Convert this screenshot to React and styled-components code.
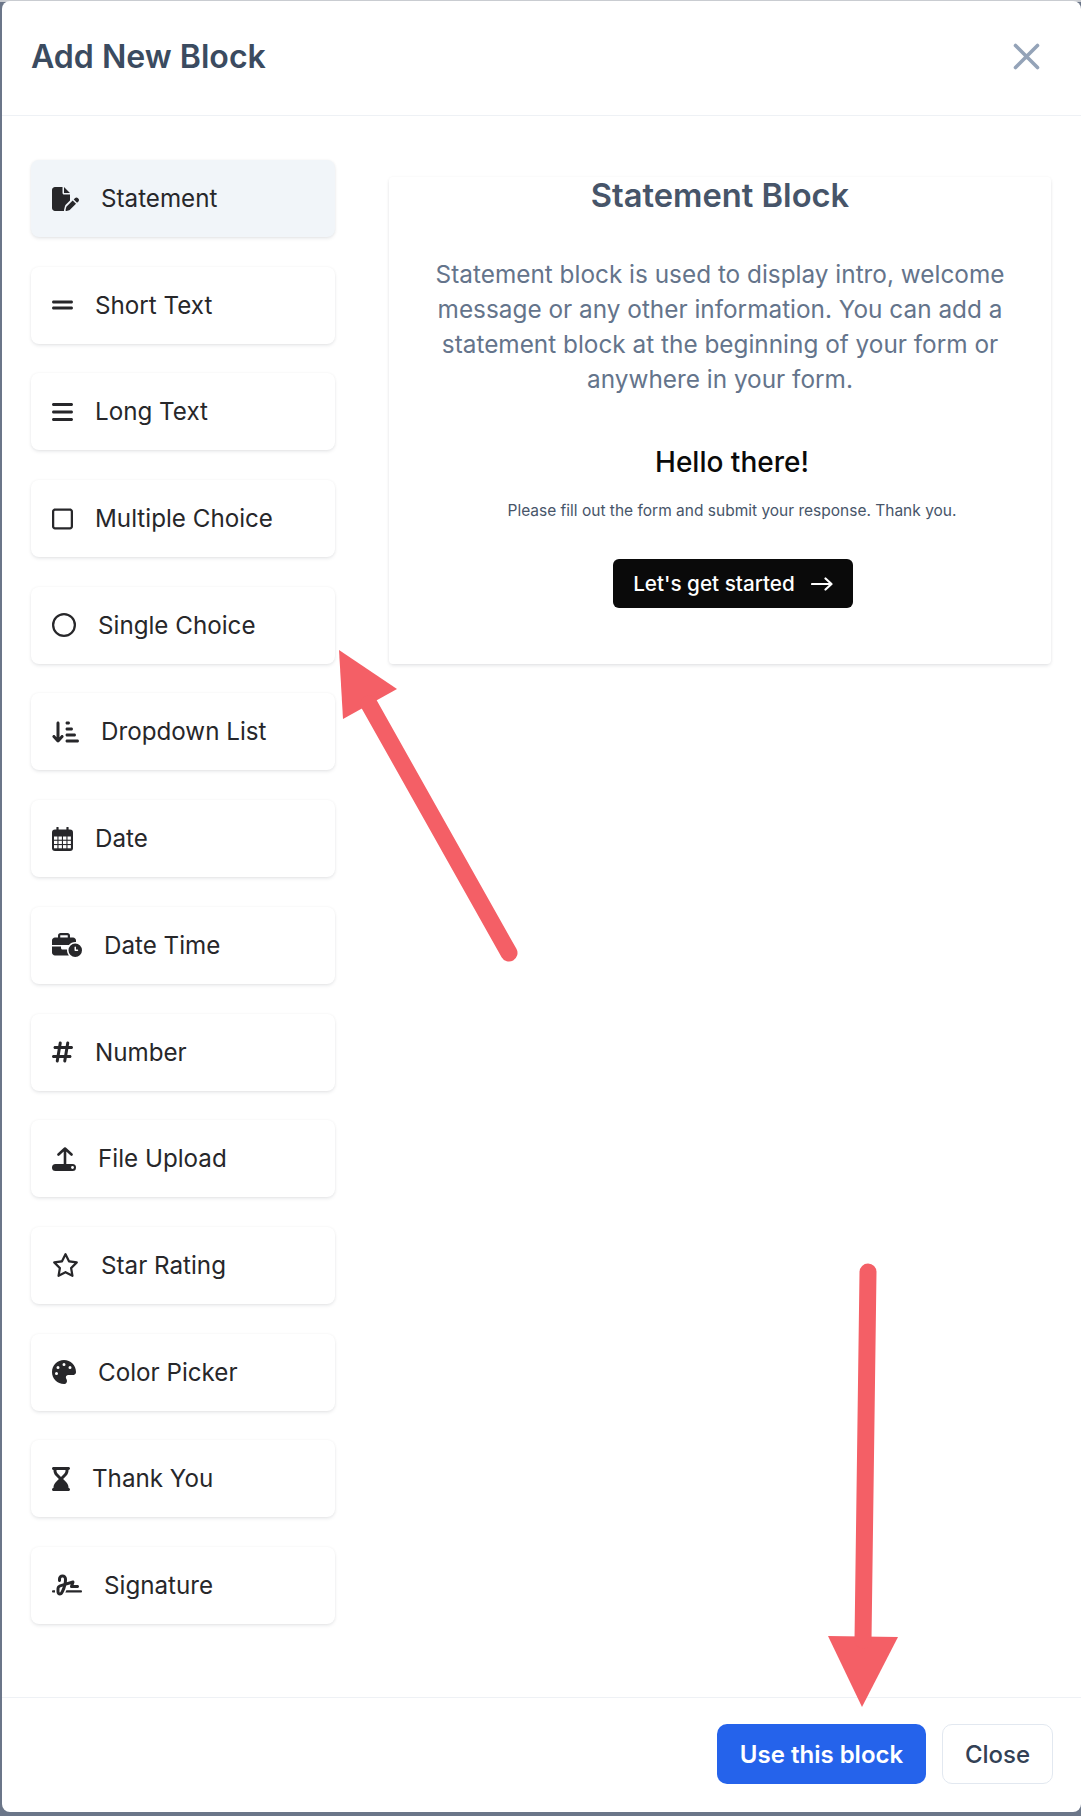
import React from 'react'
import styled, { createGlobalStyle } from 'styled-components'
import {
  FaFilePen, FaGripLines, FaBars, FaRegSquare, FaRegCircle, FaArrowDownShortWide,
  FaBusinessTime, FaHashtag, FaRegStar, FaPalette, FaHourglassEnd, FaSignature
} from 'react-icons/fa6'

const GlobalStyle = createGlobalStyle`
  html, body {
    margin: 0;
    padding: 0;
    background: #6b7689;
  }
  * {
    box-sizing: border-box;
  }
`
const Page = styled.div`
  position: relative;
  width: 1081px;
  height: 1816px;
  padding: 1px 0 4px 2px;
  font-family: Inter, "Liberation Sans", sans-serif;
  overflow: hidden;
  background: linear-gradient(#c9ccd1 0, #c9ccd1 2px, #6b7689 2px);
`
const Modal = styled.div`
  display: flex;
  flex-direction: column;
  height: 100%;
  background: #fff;
  border-radius: 8px;
`
const Header = styled.header`
  display: flex;
  align-items: center;
  justify-content: space-between;
  height: 115px;
  padding: 0 41px 3px 29px;
  border-bottom: 1.5px solid #eef1f5;
`
const Heading = styled.h2`
  margin: 0;
  font-size: 32.1px;
  font-weight: 600;
  color: #3b4b60;
`
const CloseIcon = styled.svg`
  display: block;
  width: 27px;
  height: 27px;
  stroke: #94a3b8;
  stroke-width: 3.6;
  stroke-linecap: round;
`
const Body = styled.main`
  flex: 1;
  display: flex;
  align-items: flex-start;
  gap: 54px;
  padding: 44px 30px 0 29px;
`
const BlockList = styled.ul`
  display: flex;
  flex-direction: column;
  gap: 29.7px;
  width: 304px;
  margin: 0;
  padding: 0;
  list-style: none;
`
const BlockItem = styled.li`
  display: flex;
  align-items: center;
  height: 77px;
  padding-left: 21px;
  border-radius: 8px;
  font-size: 24.2px;
  color: #27272a;
  background: ${props => (props.$active ? '#f1f5f9' : '#fff')};
  box-shadow: 0 2px 4px -1px rgba(15, 23, 42, 0.12), 0 0 3px rgba(15, 23, 42, 0.05);
`
const BlockIcon = styled.span`
  flex: none;
  display: flex;
  width: ${props => props.$width}px;
  height: 24px;
  margin-right: 22px;
  color: #27272a;

  svg {
    width: 100%;
    height: 100%;
  }
`
const Preview = styled.section`
  display: flex;
  flex-direction: column;
  align-items: center;
  width: 662px;
  height: 487px;
  margin-top: 17px;
  border-radius: 4px;
  box-shadow: 0 2px 4px -1px rgba(15, 23, 42, 0.14), 0 0 3px rgba(15, 23, 42, 0.04);
`
const PreviewTitle = styled.h3`
  margin: 0;
  height: 36px;
  font-size: 32.7px;
  line-height: 36px;
  font-weight: 600;
  color: #475569;
`
const Description = styled.p`
  width: 600px;
  margin: 44px 0 0;
  font-size: 24.35px;
  line-height: 35px;
  text-align: center;
  color: #64748b;
`
const Sample = styled.div`
  display: flex;
  flex-direction: column;
  align-items: center;
  margin: 0 0 0 24px;
`
const SampleTitle = styled.div`
  margin-top: 47px;
  font-size: 28px;
  line-height: 36px;
  font-weight: 500;
  color: #0a0a0a;
`
const SampleText = styled.div`
  margin-top: 21px;
  font-size: 15.5px;
  line-height: 20px;
  color: #475569;
`
const StartButton = styled.button`
  display: flex;
  align-items: center;
  justify-content: center;
  gap: 16px;
  width: 240px;
  height: 49px;
  margin: 38px 0 0 2px;
  border: 0;
  border-radius: 6px;
  font: 500 20.7px Inter, "Liberation Sans", sans-serif;
  color: #fff;
  background: #0a0a0a;

  svg {
    width: 22px;
    height: 14px;
    fill: none;
    stroke: #fff;
    stroke-width: 2.2;
    stroke-linecap: round;
    stroke-linejoin: round;
  }
`
const Footer = styled.footer`
  display: flex;
  justify-content: flex-end;
  gap: 16px;
  padding: 26px 28px 28px 0;
  border-top: 1.5px solid #eef1f5;
`
const FooterButton = styled.button`
  height: 60px;
  border-radius: 10px;
  font: ${props => (props.$primary ? 600 : 500)} 24px Inter, "Liberation Sans", sans-serif;
  width: ${props => (props.$primary ? '209px' : '111px')};
  color: ${props => (props.$primary ? '#fff' : '#334155')};
  background: ${props => (props.$primary ? '#2563eb' : '#fff')};
  border: ${props => (props.$primary ? '0' : '1.5px solid #e2e8f0')};
`
const Arrows = styled.svg`
  position: absolute;
  top: 0;
  left: 0;
  width: 1081px;
  height: 1816px;
  pointer-events: none;
  fill: #f45f66;
  stroke: #f45f66;
`

// thin arrow over a rounded tray, the packages only have a fat-arrow version
const UploadIcon = () => (
  <svg viewBox='0 0 24 24'>
    <path d='M13 1.5V18M6.5 7.5 13 1.5 19.5 7.5' fill='none' stroke='currentColor' strokeWidth='2.6' strokeLinecap='round' strokeLinejoin='round' />
    <rect x='0' y='17' width='24' height='7' rx='3.5' fill='currentColor' />
    <circle cx='20.5' cy='20.5' r='1.4' fill='#fff' />
  </svg>
)

const cellX = [2, 6.5, 11, 15.5]
const cellY = [9.5, 13.8, 18.1]

// same for the calendar, its grid has four columns here
const CalendarIcon = () => (
  <svg viewBox='0 0 21 24'>
    <path d='M5.5 0.8V4M15.5 0.8V4' stroke='currentColor' strokeWidth='2.2' strokeLinecap='round' />
    <rect x='0' y='2.5' width='21' height='21.5' rx='3' fill='currentColor' />
    {cellY.map(y => cellX.map(x => (
      <rect key={`${x}-${y}`} x={x} y={y} width='3.4' height='3.2' fill='#fff' />
    )))}
  </svg>
)

// width follows each icon's viewBox at 24px high
const blocks = [
  { label: 'Statement', Icon: FaFilePen, width: 27, active: true },
  { label: 'Short Text', Icon: FaGripLines, width: 21 },
  { label: 'Long Text', Icon: FaBars, width: 21 },
  { label: 'Multiple Choice', Icon: FaRegSquare, width: 21 },
  { label: 'Single Choice', Icon: FaRegCircle, width: 24 },
  { label: 'Dropdown List', Icon: FaArrowDownShortWide, width: 27 },
  { label: 'Date', Icon: CalendarIcon, width: 21 },
  { label: 'Date Time', Icon: FaBusinessTime, width: 30 },
  { label: 'Number', Icon: FaHashtag, width: 21 },
  { label: 'File Upload', Icon: UploadIcon, width: 24 },
  { label: 'Star Rating', Icon: FaRegStar, width: 27 },
  { label: 'Color Picker', Icon: FaPalette, width: 24 },
  { label: 'Thank You', Icon: FaHourglassEnd, width: 18 },
  { label: 'Signature', Icon: FaSignature, width: 30 }
]

export default function App () {
  return (
    <Page>
      <GlobalStyle />
      <Modal>
        <Header>
          <Heading>Add New Block</Heading>
          <CloseIcon viewBox='0 0 27 27'>
            <path d='M2.5 2.5 24.5 24.5M24.5 2.5 2.5 24.5' />
          </CloseIcon>
        </Header>
        <Body>
          <BlockList>
            {blocks.map(({ label, Icon, width, active }) => (
              <BlockItem key={label} $active={active}>
                <BlockIcon $width={width}><Icon /></BlockIcon>
                {label}
              </BlockItem>
            ))}
          </BlockList>
          <Preview>
            <PreviewTitle>Statement Block</PreviewTitle>
            <Description>
              Statement block is used to display intro, welcome message or any other information. You can add a statement block at the beginning of your form or anywhere in your form.
            </Description>
            <Sample>
              <SampleTitle>Hello there!</SampleTitle>
              <SampleText>Please fill out the form and submit your response. Thank you.</SampleText>
              <StartButton>
                Let's get started
                <svg viewBox='0 0 22 14'>
                  <path d='M1 7H20M14.5 1.5 20.5 7 14.5 12.5' />
                </svg>
              </StartButton>
            </Sample>
          </Preview>
        </Body>
        <Footer>
          <FooterButton $primary>Use this block</FooterButton>
          <FooterButton>Close</FooterButton>
        </Footer>
      </Modal>
      <Arrows viewBox='0 0 1081 1816'>
        <polygon points='339,650 397,689 343,719' strokeWidth='0' />
        <line x1='369' y1='704' x2='509' y2='953' strokeWidth='17' strokeLinecap='round' />
        <polygon points='828,1636 898,1637 862,1707' strokeWidth='0' />
        <line x1='868' y1='1272' x2='863' y2='1640' strokeWidth='17' strokeLinecap='round' />
      </Arrows>
    </Page>
  )
}
